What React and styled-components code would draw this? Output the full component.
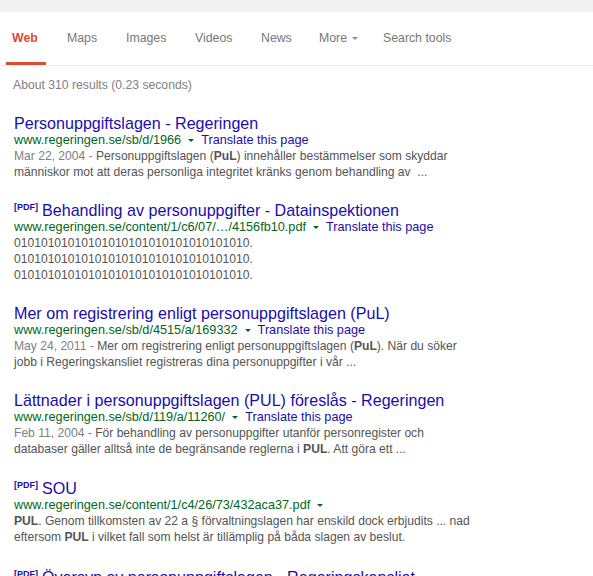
import styled, { createGlobalStyle } from "styled-components";

const GlobalStyle = createGlobalStyle`
	html, body {
		margin: 0;
		padding: 0;
		background: #fff;
		font-family: Arial, "Liberation Sans", sans-serif;
	}
`;

const TopStrip = styled.div`
	height: 12px;
	background: #f1f1f1;
`;

const TabBar = styled.nav`
	display: flex;
	height: 54px;
	box-sizing: border-box;
	padding-left: 6px;
	border-bottom: 1px solid #ebebeb;
`;

const Tab = styled.a`
	display: flex;
	align-items: flex-start;
	gap: 5px;
	box-sizing: border-box;
	width: ${(p) => p.$width}px;
	margin-right: ${(p) => p.$after || 0}px;
	height: 53px;
	padding: 18px 0 0 6px;
	font-size: 12.3px;
	line-height: 16px;
	white-space: nowrap;
	color: ${(p) => (p.$active ? "#dd4b39" : "#777")};
	font-weight: ${(p) => (p.$active ? "bold" : "normal")};
	border-bottom: 3px solid ${(p) => (p.$active ? "#dd4b39" : "transparent")};
	text-decoration: none;
	cursor: pointer;
`;

const Caret = styled.span`
	width: 0;
	height: 0;
	margin-top: ${(p) => p.$offset || 0}px;
	border-left: 3px solid transparent;
	border-right: 3px solid transparent;
	border-top: 3px solid ${(p) => p.$color || "#909090"};
`;

const Stats = styled.div`
	padding: 11px 0 0 13px;
	font-size: 12.2px;
	line-height: 16px;
	color: #808080;
`;

const Results = styled.div`
	padding: 22px 0 0 14px;
	display: flex;
	flex-direction: column;
	gap: 22px;
`;

const Result = styled.div`
	display: flex;
	flex-direction: column;
	margin-bottom: ${(p) => p.$extra || 0}px;
`;

const Title = styled.a`
	font-size: 16.1px;
	line-height: 17px;
	color: #1a0dab;
	text-decoration: none;
	white-space: nowrap;
`;

const Tag = styled.span`
	font-size: 9px;
	line-height: 1;
	font-weight: bold;
	color: #1a0dab;
	vertical-align: 6px;
	margin-right: 4px;
`;

const UrlLine = styled.div`
	display: flex;
	align-items: center;
	gap: 7px;
	font-size: 12.7px;
	line-height: 16px;
	white-space: nowrap;
`;

const Cite = styled.cite`
	font-style: normal;
	color: #006621;
`;

const Translate = styled.a`
	color: #1a0dab;
`;

const Snippet = styled.div`
	font-size: 12.1px;
	line-height: 16px;
	color: #545454;
	white-space: nowrap;
`;

const Date = styled.span`
	color: #808080;
`;

const tabs = [
	{ label: "Web", active: true, width: 40, after: 15 },
	{ label: "Maps", width: 59 },
	{ label: "Images", width: 69 },
	{ label: "Videos", width: 66 },
	{ label: "News", width: 58 },
	{ label: "More", caret: true, width: 64 },
	{ label: "Search tools", width: 90 },
];

function UrlRow({ url, translate }) {
	return (
		<UrlLine>
			<Cite>{url}</Cite>
			<Caret $color="#006621" $offset={1} />
			{translate && <Translate>Translate this page</Translate>}
		</UrlLine>
	);
}

export default function App() {
	return (
		<>
			<GlobalStyle />
			<TopStrip />
			<TabBar>
				{tabs.map((t) => (
					<Tab key={t.label} $active={t.active} $width={t.width} $after={t.after}>
						{t.label}
						{t.caret && <Caret $offset={7} />}
					</Tab>
				))}
			</TabBar>
			<Stats>About 310 results (0.23 seconds)</Stats>
			<Results>
				<Result>
					<Title>Personuppgiftslagen - Regeringen</Title>
					<UrlRow url="www.regeringen.se/sb/d/1966" translate />
					<Snippet>
						<Date>Mar 22, 2004 - </Date>Personuppgiftslagen (<b>PuL</b>) innehåller
						bestämmelser som skyddar
						<br />
						människor mot att deras personliga integritet kränks genom behandling
						av &nbsp;...
					</Snippet>
				</Result>
				<Result>
					<Title>
						<Tag>[PDF]</Tag>Behandling av personuppgifter - Datainspektionen
					</Title>
					<UrlRow url="www.regeringen.se/content/1/c6/07/…/4156fb10.pdf" translate />
					<Snippet>
						01010101010101010101010101010101010.
						<br />
						01010101010101010101010101010101010.
						<br />
						01010101010101010101010101010101010.
					</Snippet>
				</Result>
				<Result>
					<Title>Mer om registrering enligt personuppgiftslagen (PuL)</Title>
					<UrlRow url="www.regeringen.se/sb/d/4515/a/169332" translate />
					<Snippet>
						<Date>May 24, 2011 - </Date>Mer om registrering enligt
						personuppgiftslagen (<b>PuL</b>). När du söker
						<br />
						jobb i Regeringskansliet registreras dina personuppgifter i vår ...
					</Snippet>
				</Result>
				<Result $extra={1}>
					<Title>Lättnader i personuppgiftslagen (PUL) föreslås - Regeringen</Title>
					<UrlRow url="www.regeringen.se/sb/d/119/a/11260/" translate />
					<Snippet>
						<Date>Feb 11, 2004 - </Date>För behandling av personuppgifter utanför
						personregister och
						<br />
						databaser gäller alltså inte de begränsande reglerna i <b>PUL</b>. Att
						göra ett ...
					</Snippet>
				</Result>
				<Result $extra={2}>
					<Title>
						<Tag>[PDF]</Tag>SOU
					</Title>
					<UrlRow url="www.regeringen.se/content/1/c4/26/73/432aca37.pdf" />
					<Snippet>
						<b>PUL</b>. Genom tillkomsten av 22 a § förvaltningslagen har enskild
						dock erbjudits ... nad
						<br />
						eftersom <b>PUL</b> i vilket fall som helst är tillämplig på båda
						slagen av beslut.
					</Snippet>
				</Result>
				<Result>
					<Title>
						<Tag>[PDF]</Tag>Översyn av personuppgiftslagen - Regeringskansliet
					</Title>
				</Result>
			</Results>
		</>
	);
}
